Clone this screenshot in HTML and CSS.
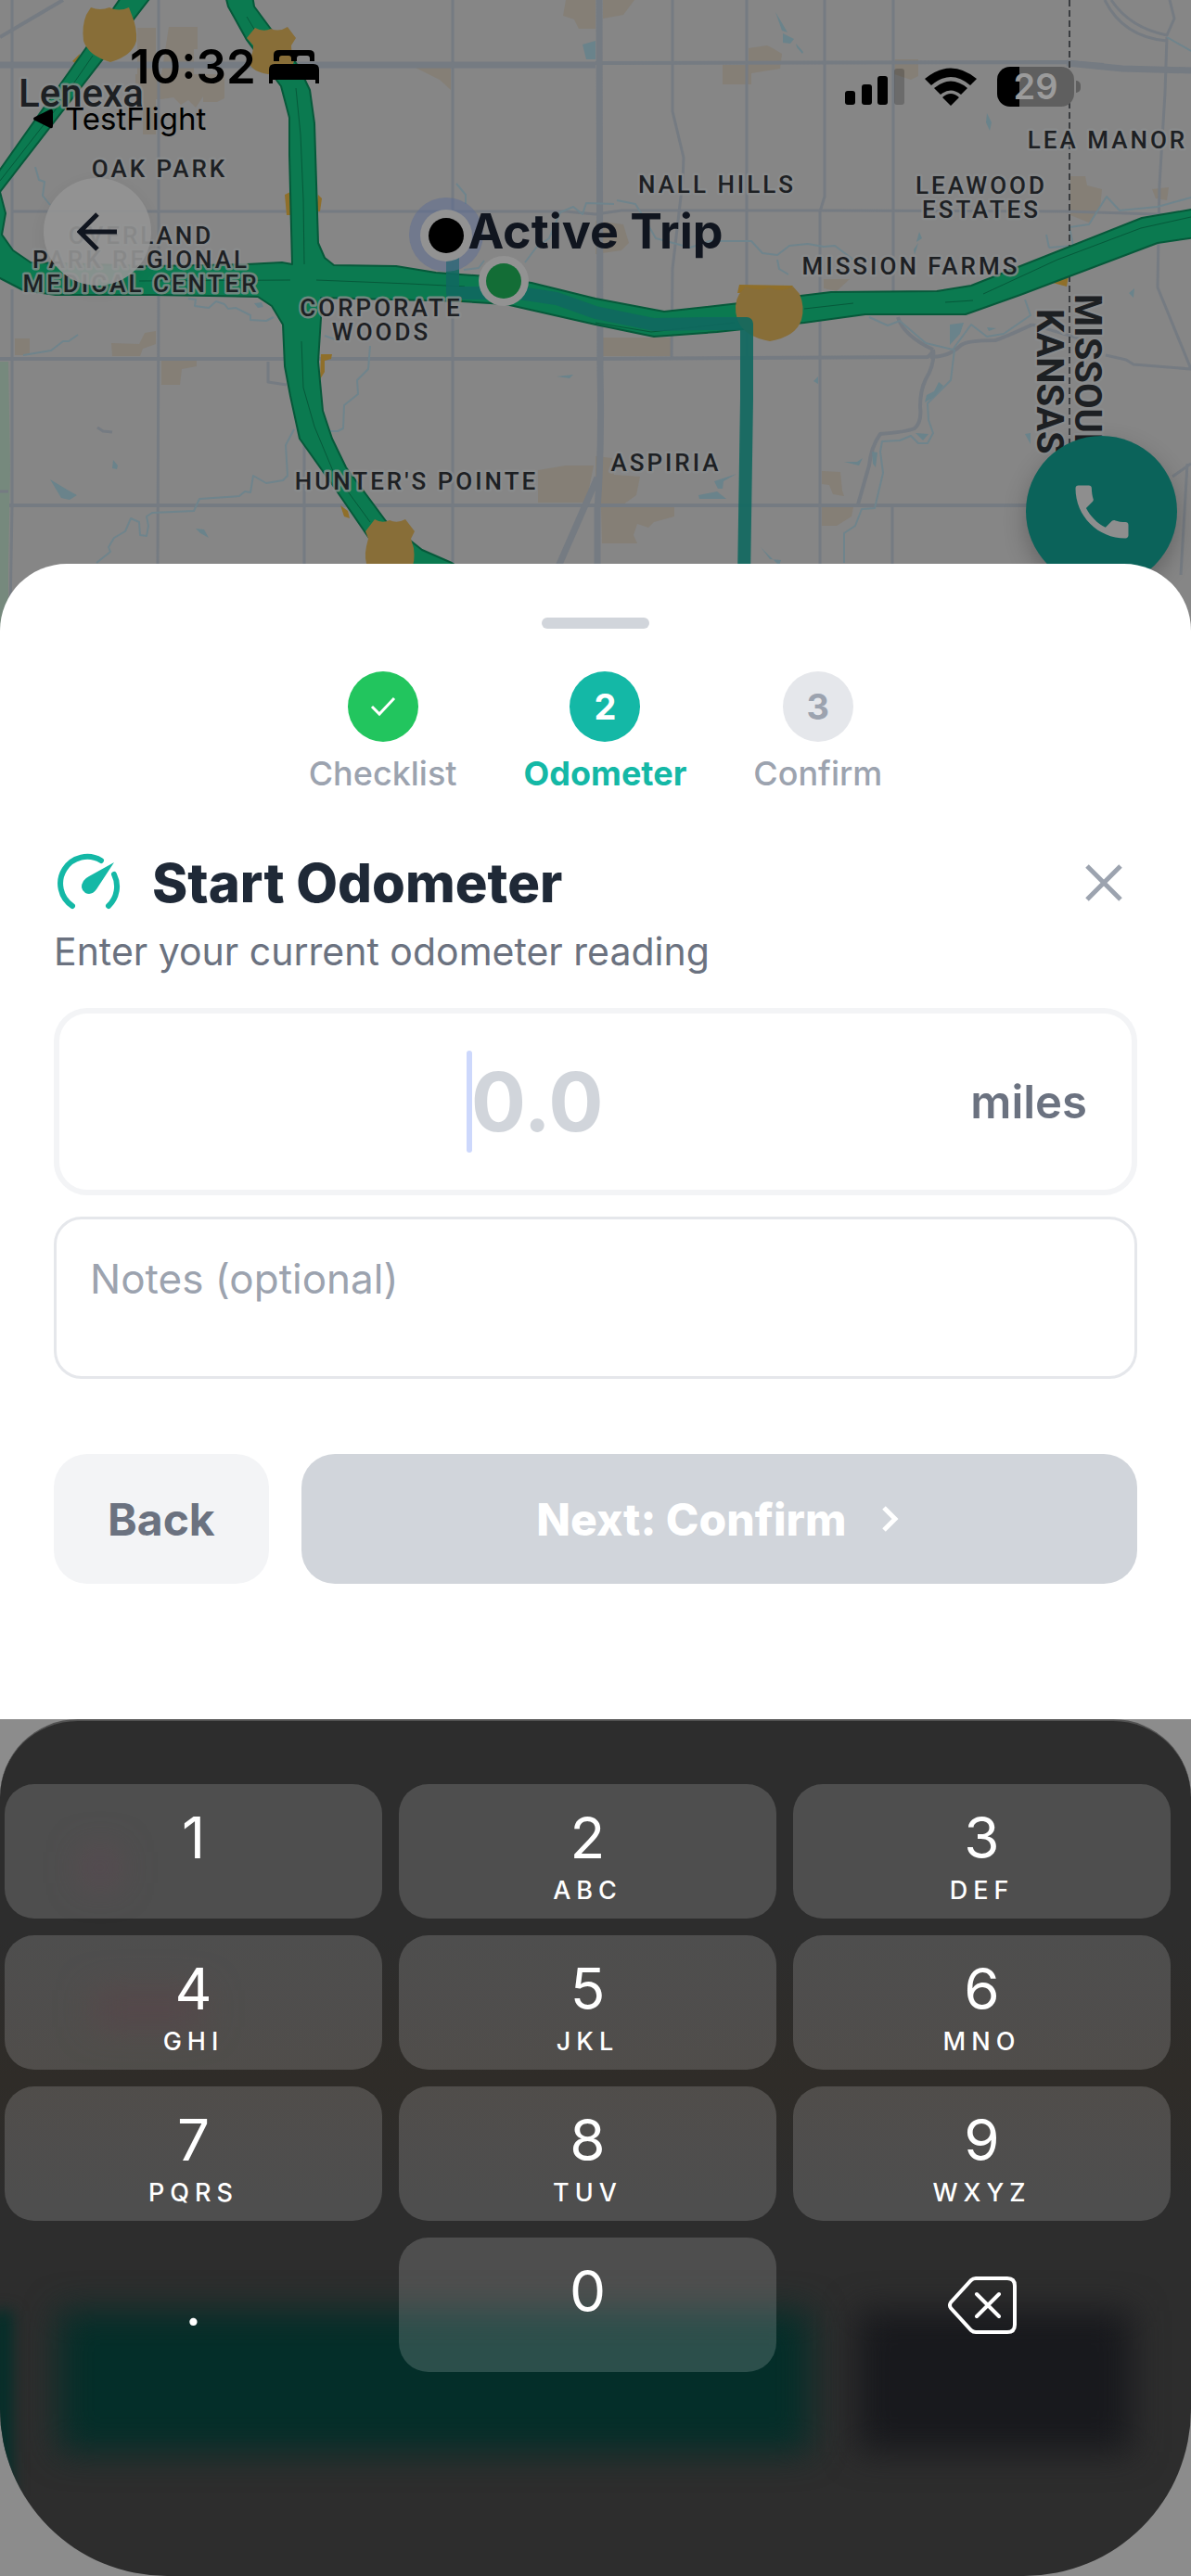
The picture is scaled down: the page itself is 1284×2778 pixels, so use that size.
FILE: index.html
```html
<!DOCTYPE html>
<html lang="en">
<head>
    <meta charset="UTF-8">
    <meta name="viewport" content="width=device-width, initial-scale=1">
    <title>Active Trip</title>
    <link rel="stylesheet" href="styles.css">
</head>
<body>
    <header class="map-view">
        <svg class="map" viewBox="0 0 1284 720" preserveAspectRatio="xMidYMin slice" aria-hidden="true">
            <!-- land patches -->
            <g class="patch">
                <path d="M148 30h20v115h-14v-62h-6zM182 29h31v24h-4v27h33v26l-8 4h-15v-6l-8 12-8-8-8 5-8-8-13 2h-28V80h28z"/>
                <path d="M448 73h38v24l-12-11zM610 0h32v31h-18l-5-10-12-4zM650 0h34l-12 16-22 4z"/>
                <path d="M807 52l20-3 6 3 10 6-2 16-31 5v12h-31V70h28zM965 64h25v18l-8 4-18-6zM1154 190h16l2 10 16 4-2 20-12 16-20-8zM1242 204l18-2-2 14-12-2z"/>
                <path d="M16 365h16v18H16zM120 370l30 1 6-12 12-2v14l-14 5-3 8h-30zM174 389h38v6l-16 3-2 17h-20zM580 507l30-5h30l-8 40h-52z"/>
                <path d="M649 364h76v20h-76zM642 492l18 2 2 18 28 2-4 20-14 10h-30zM648 547h79v10l-22 6-6 6-12-4-4 12 4 9h-38zM886 508l20 1 2 20 2 6-12-2-4-10-8-1zM886 547h34l-2 10-16 10h-16zM888 301h28l-14 13-14-3z"/>
                <path d="M642 238l30 4 6 20-8 8-28 4z"/>
            </g>
            <path class="park" d="M0 390h9l2 115-2 103v112H0z"/>

            <!-- street grid -->
            <g class="street">
                <path d="M13 0V283M13 312V545L10 720M171 0V283M171 318L170 620M488 0V300M488 330V620M328 390V620"/>
                <path d="M725 0V120l12 50-1 25-11 95-1 95M805 0V386M889 0v212l-5 16v400M963 0v340M962 545v75"/>
                <path d="M13 228H610L642 231 670 227H884L1150 228 1284 232"/>
                <path d="M1191 0q20 40 67 44M1198 0q20 30 60 38l8-18-5-20M1258 40l-2 60-6 100-2 110 36 88M1113 350l50 15M1192 383l22 5 8 5 62 5M1150 545h-40M1284 500l-20 14M1280 500l-7 120"/>
                <path d="M289 390v22l20 3M105 461l6 4 10 1M0 530h9"/>
            </g>
            <g class="street wide">
                <path d="M0 387H642L1000 385q4-2 6-8M10 545H1110M642 68L1150 67 1190 70"/>
                <path d="M1006 377q2 16-8 32-6 12-6 30 2 16-6 23-10 4-37 6-10 14-12 34l-12 42M968 342q6 20 38 35M1003 385q20 0 32-12 6-6 38-6 12-4 40-17"/>
                <path d="M0 40L68 0"/>
            </g>
            <g class="street major">
                <path d="M0 70H642M646 0L647 400q2 80-3 150v70M598 620L644 515M1150 68l60 6 74 2"/>
            </g>

            <!-- creeks and ponds -->
            <g class="creek">
                <path d="M104 607l15-12-2-5 6-10 12-7 6-14 9 4 1 14 7 1 2-11-2-10 6-4 45-2 6-13 43-3 6-5 6 1 3-18 14 8 18-3 5-5-2-33 9-17"/>
                <path d="M399 373l-2 25-12 12 1 15-15 12-1 25-6 3h-8M25 383l30-5 13-10h6l10-7"/>
                <path d="M203 322l8 1-1 7 15 2 8-7 9 3 4 5 8-1 16 8v5l17 1 8-4M38 180l4 14 6 2-2 15 8 10"/>
                <path d="M937 342l20 9 13-5 28 24 29 7 20-27 17 13 18-3 29-20-6-17"/>
                <path d="M1029 377l-4 33-25 25 1 18 5 14-6 11h-10l-8-8-12 5-19 1-2 11 3 23-9 38-14 1-7 18-12 8v32"/>
                <path d="M566 283l12-16 14-10 12-28 14-6 10 8 4-12 30 1M665 216l20 4 10 16 12 21 37 10 21-7h45l12 13 16 2 13-10 20-2 17 3 12-1 20 15M492 198l10 12v10M500 291l16-2 6-8M838 280l2 10 10 6"/>
                <path d="M1131 267l-3-14M1131 267l26-2-4-20 21-3 19-30 14 15 41-4 36-10M1258 40l26 15M350 362l14 5"/>
            </g>
            <g class="pond">
                <path d="M836 13l13 22-6-2zM844 36l12 6-4 5-8-1zM858 47l8 9-1 2-6-7zM628 48l14-4v20h-10zM1064 122l5 10-2 9-4-9zM991 250l3 7-6 4zM990 262l-4 13-1-6z"/>
                <path d="M54 517l20 12 9 5-8 5-9-2zM122 496l5 6-1 4-5-1zM211 570l9 1 5 9-9-5zM274 327l8-1 2 5-6 1zM600 406l18-2-4 4z"/>
                <path d="M1024 350l15-2-4 12-11 12zM1012 412l5 4-10 12-10 6 2-8 8-4zM987 467l14 1-6 7zM794 511l-14 8-1 8h-5l-4-8zM753 534l20-4 10 8H754zM820 590l10 13 12 1-2 6zM940 487l6 1-2 16-3-4zM910 498h14l6-4-4 8zM1105 468l6-1v12zM1217 316l6-5-1 10zM1064 353l10 1-8 3zM877 411l5-5v8z"/>
            </g>
            <path class="state-line" d="M1153 0V500"/>

            <!-- highways -->
            <g class="highway-stub">
                <path d="M78 66l8-8-2 12zM307 210l8-4v26h-6zM343 210l4 4-2 14h-4zM346 382h12l-1 5-7 2v12l-5 8zM367 545l8 6 2 8-6-2zM797 307l58 1-4 6-56 2zM1135 305l17-8-2 12z"/>
            </g>
            <path class="highway" d="M164 -5L0 207 6 230 2 253 14 270 33 283 164 287 266 285 304 283 315 285 312 167V127L303 93 266 43 246 7 243 -5H272L274 7 291 30 322 72 334 97 339 133 343 262 350 278 360 286 427 287 470 294 524 298 573 305 642 322 716 336 797 327 896 315 1010 314 1047 308 1100 287 1231 235 1290 225V256L1248 262 1100 318 1041 339H933L867 348 773 358 705 363 642 350 545 328 498 325 346 321V343L343 390 348 443 358 473 373 504 416 562 455 593 487 607 515 625H450L397 579 360 525 323 473 313 427 307 395 305 350 293 330 278 320 164 318H60L25 313 0 300 -20 290V215L0 183 94 50 132 -5z"/>
            <g class="highway-line">
                <path d="M0 195L60 118 100 60M266 18l9 15M319 95l5 50 3 70 1 70M150 303l163-1M341 302l100 4 60 3M325 368l2 50 12 42 20 48 40 55M642 348l60 10 90-10M867 333l53-6M1019 326l30-2M1060 317l80-37 90-34 54-12"/>
            </g>

            <g class="shield">
                <path d="M98 8q10 4 20 0 10 5 21 0l3 8q6 14 5 28-4 16-28 23-24-7-29-23-2-16 3-28z"/>
                <path d="M275 30q9 5 17 1 9 4 18-2l9 12-5 8q0 8 3 14 2 13-28 17-22-4-20-16 4-6 4-15l-7-8z"/>
                <path d="M804 309q13 6 25 1 12 6 26-1l7 8q6 14 2 28-6 18-34 23-28-5-35-23-5-16 2-28z"/>
                <path d="M404 560q8 5 16 1 8 4 17-1l10 13-4 8 3 10q2 16-3 22H397q-5-10-2-24l2-8-3-8z"/>
            </g>

            <!-- trip route -->
            <path class="route" d="M488 270V316H560L600 322 642 337 705 350 760 349H805V430L802 625"/>
            <circle class="halo" cx="481" cy="253" r="40"/>
            <circle class="ring" cx="481" cy="254" r="28"/>
            <circle class="dot" cx="481" cy="254" r="19"/>
            <circle class="ring" cx="543" cy="303" r="27"/>
            <circle class="dot-start" cx="543" cy="303" r="19"/>

            <g class="place">
                <text x="172" y="191">OAK PARK</text>
                <text x="152" y="263">OVERLAND</text>
                <text x="152" y="289">PARK REGIONAL</text>
                <text x="152" y="315">MEDICAL CENTER</text>
                <text x="411" y="341">CORPORATE</text>
                <text x="411" y="367">WOODS</text>
                <text x="449" y="528">HUNTER'S POINTE</text>
                <text x="718" y="508">ASPIRIA</text>
                <text x="773" y="208">NALL HILLS</text>
                <text x="1058" y="209">LEAWOOD</text>
                <text x="1058" y="235">ESTATES</text>
                <text x="1194" y="160">LEA MANOR</text>
                <text x="982" y="296">MISSION FARMS</text>
            </g>
            <text class="city" x="20" y="115">Lenexa</text>
            <text class="state" transform="translate(1118 333) rotate(90)">KANSAS</text>
            <text class="state" transform="translate(1159 317) rotate(90)">MISSOURI</text>
        </svg>

        <div class="status-bar">
            <div class="status-left">
                <div class="clock">
                    <span>10:32</span>
                    <svg width="54" height="38" viewBox="0 0 54 38" aria-hidden="true">
                        <path d="M5 13V6q0-5 6-5h32q6 0 6 5v7h-5V10q0-3-3-3H33q-3 0-3 3v3h-6v-3q0-3-3-3H14q-3 0-3 3v3zM0 37V22q0-6 6-6h42q6 0 6 6v15h-4v-4H4v4z"/>
                    </svg>
                </div>
                <a class="back-app" href="#">
                    <svg width="22" height="22" viewBox="0 0 22 22" aria-hidden="true"><path d="M1 9.500Q-1 11 1 12.500L18 21q3 1 3-2V3q0-3-3-2z"/></svg>
                    TestFlight
                </a>
            </div>
            <div class="status-right">
                <svg width="64" height="42" viewBox="0 0 64 42" aria-hidden="true">
                    <rect x="0" y="25" width="11" height="15" rx="3"/>
                    <rect x="18" y="18" width="11" height="22" rx="3"/>
                    <rect x="35" y="9" width="11" height="31" rx="3"/>
                    <rect x="53" y="1" width="11" height="39" rx="3" opacity=".2"/>
                </svg>
                <svg width="56" height="42" viewBox="0 0 56 42" aria-hidden="true">
                    <path d="M0 12Q28-11 56 12L49 19Q28 1 7 19zM10 22q18-15 36 0l-7 7q-11-9-22 0zM19 32q9-8 18 0l-9 9z"/>
                </svg>
                <div class="battery"><span>29</span></div>
            </div>
        </div>

        <div class="nav-bar">
            <button class="nav-back" type="button" aria-label="Go back">
                <svg width="44" height="44" viewBox="0 0 44 44" aria-hidden="true"><path d="M43 22H4M22 3L3 22l19 19"/></svg>
            </button>
            <h1>Active Trip</h1>
        </div>

        <button class="call" type="button" aria-label="Call">
            <svg width="76" height="76" viewBox="0 0 24 24" aria-hidden="true">
                <path d="M20 15.500c-1.200 0-2.500-.2-3.600-.6-.3-.1-.7 0-1 .2l-2.200 2.200c-2.800-1.400-5.100-3.800-6.600-6.600l2.200-2.200c.3-.3.4-.7.200-1-.3-1.100-.5-2.300-.5-3.500 0-.6-.4-1-1-1H4c-.6 0-1 .4-1 1 0 9.400 7.600 17 17 17 .6 0 1-.4 1-1v-3.500c0-.6-.4-1-1-1z"/>
            </svg>
        </button>
    </header>

    <main class="sheet">
        <div class="handle"></div>

        <ol class="steps">
            <li class="step done">
                <span class="badge">
                    <svg width="30" height="22" viewBox="0 0 30 22" aria-hidden="true"><path d="M3 11l8 8L27 2"/></svg>
                </span>
                Checklist
            </li>
            <li class="step active"><span class="badge">2</span>Odometer</li>
            <li class="step"><span class="badge">3</span>Confirm</li>
        </ol>

        <form>
            <div class="title-row">
                <svg class="gauge" width="72" height="72" viewBox="-3 0 72 72" aria-hidden="true">
                    <path class="arc" d="M17 61A29 29 0 0 1 48 12M62 27A29 29 0 0 1 56 61"/>
                    <path d="M62 14L43 43Q38 50 31 47 24 42 29 34q2-3 6-5z"/>
                </svg>
                <h2>Start Odometer</h2>
                <button class="close" type="button" aria-label="Close">
                    <svg width="42" height="42" viewBox="0 0 42 42" aria-hidden="true"><path d="M3 3l36 36M39 3L3 39"/></svg>
                </button>
            </div>
            <p class="hint"><label for="odometer">Enter your current odometer reading</label></p>

            <div class="reading">
                <div class="reading-field">
                    <input type="text" id="odometer" inputmode="decimal" placeholder="0.0">
                    <span class="caret"></span>
                </div>
                <span class="unit">miles</span>
            </div>

            <textarea class="notes" id="notes" placeholder="Notes (optional)" aria-label="Notes (optional)"></textarea>

            <div class="actions">
                <button class="back" type="button">Back</button>
                <button class="next" type="button" disabled>
                    Next: Confirm
                    <svg width="24" height="32" viewBox="0 0 24 32" aria-hidden="true"><path d="M5 4l12 12L5 28"/></svg>
                </button>
            </div>
        </form>
    </main>

    <section class="keyboard" aria-label="Number pad">
        <div class="pad">
            <div class="glow glow-teal"></div>
            <div class="glow glow-edge"></div>
            <div class="glow glow-dark"></div>
            <div class="glow glow-pink"></div>
            <div class="glow glow-red"></div>
            <div class="keys">
                <button type="button" class="key">1</button>
                <button type="button" class="key">2<small>ABC</small></button>
                <button type="button" class="key">3<small>DEF</small></button>
                <button type="button" class="key">4<small>GHI</small></button>
                <button type="button" class="key">5<small>JKL</small></button>
                <button type="button" class="key">6<small>MNO</small></button>
                <button type="button" class="key">7<small>PQRS</small></button>
                <button type="button" class="key">8<small>TUV</small></button>
                <button type="button" class="key">9<small>WXYZ</small></button>
                <button type="button" class="key plain">.</button>
                <button type="button" class="key">0</button>
                <button type="button" class="key plain" aria-label="Delete">
                    <svg width="74" height="62" viewBox="0 0 74 62" aria-hidden="true">
                        <path d="M30 2H64q8 0 8 8V52q0 8-8 8H30q-3 0-5-2L3 34q-2-3 0-6L25 4q2-2 5-2zM31 19L55 43M55 19L31 43"/>
                    </svg>
                </button>
            </div>
        </div>
    </section>
</body>
</html>
```

FILE: styles.css
```css
* {
    box-sizing: border-box;
}

body {
    margin: 0;
    min-height: 100vh;
    display: flex;
    flex-direction: column;
    background-color: #8c8c8c;
    font-family: Inter, "Liberation Sans", sans-serif;
}

button,
input,
textarea {
    font-family: inherit;
    border: none;
    margin: 0;
    padding: 0;
}

svg {
    display: block;
    flex: none;
}

/* Map */
.map-view {
    position: relative;
    height: 720px;
    overflow: hidden;
    background-color: #868686;
}

.map {
    position: absolute;
    top: 0;
    left: 0;
    width: 100%;
    height: 100%;
    font-family: Roboto, sans-serif;
    font-weight: 500;
}

.patch { fill: #857f76; }
.park { fill: #76897d; }
.pond { fill: #6a838b; }

.street,
.creek {
    fill: none;
    stroke: #757b82;
    stroke-width: 3px;
    stroke-linejoin: round;
}

.creek {
    stroke: #6f848c;
    stroke-width: 2px;
}

.wide { stroke-width: 4px; }
.major { stroke-width: 7px; }

.state-line {
    stroke: #3a3d40;
    stroke-width: 2px;
    stroke-dasharray: 7 4;
}

.highway {
    fill: #0b7a50;
    stroke: #06593a;
    stroke-width: 2px;
    stroke-linejoin: round;
}

.highway-line {
    fill: none;
    stroke: #06593a;
    stroke-width: 1px;
}

.highway-stub { fill: #8f6f2a; }
.shield { fill: #886e38; }

.route {
    fill: none;
    stroke: #0f685f;
    stroke-width: 14px;
    stroke-linejoin: round;
    opacity: .9;
}

.halo {
    fill: #5c6b94;
    opacity: .5;
}

.ring { fill: #929292; }
.dot { fill: #000; }
.dot-start { fill: #136d36; }

.place text,
.city,
.state {
    fill: #1d2023;
    stroke: #8b8d8e;
    stroke-width: 5px;
    stroke-linejoin: round;
    stroke-opacity: .8;
    paint-order: stroke;
}

.place {
    font-size: 26px;
    letter-spacing: 3px;
    text-anchor: middle;
}

.city { font-size: 42px; }

.state {
    font-size: 40px;
    font-weight: 700;
}

/* Status bar and navigation */
.status-bar {
    position: relative;
    display: flex;
    justify-content: space-between;
    padding: 42px 126px 0 36px;
}

.clock {
    display: flex;
    align-items: center;
    gap: 14px;
    padding-left: 104px;
    font-size: 51px;
    font-weight: 600;
    line-height: 60px;
}

.back-app {
    display: flex;
    align-items: center;
    gap: 12px;
    margin-top: 6px;
    color: #000;
    font-size: 33px;
    line-height: 40px;
    text-decoration: none;
}

.status-right {
    display: flex;
    align-items: center;
    align-self: flex-start;
    gap: 22px;
    padding-top: 30px;
}

.battery {
    position: relative;
    width: 83px;
    height: 43px;
    border-radius: 14px;
    background: linear-gradient(to right, #000 24px, #5f5f5f 24px);
    color: #9b9b9b;
    font-size: 38px;
    font-weight: 600;
    line-height: 43px;
    text-align: center;
}

.battery::after {
    content: "";
    position: absolute;
    right: -7px;
    top: 15px;
    width: 5px;
    height: 13px;
    border-radius: 0 5px 5px 0;
    background-color: #5f5f5f;
}

.nav-bar {
    position: relative;
    display: grid;
    grid-template-columns: 116px 1fr 116px;
    align-items: center;
    margin-top: 44px;
    padding: 0 47px;
}

.nav-back {
    display: flex;
    align-items: center;
    justify-content: center;
    width: 116px;
    height: 116px;
    border-radius: 50%;
    background-color: rgba(148, 148, 148, .9);
    box-shadow: 0 6px 18px rgba(0, 0, 0, .06);
}

.nav-back svg {
    fill: none;
    stroke: #10151f;
    stroke-width: 5px;
}

.nav-bar h1 {
    margin: 0;
    color: #10151f;
    font-size: 52px;
    font-weight: 700;
    line-height: 60px;
    text-align: center;
}

.call {
    position: absolute;
    right: 15px;
    top: 470px;
    display: flex;
    align-items: center;
    justify-content: center;
    width: 163px;
    height: 163px;
    border-radius: 50%;
    background-color: #0b635a;
    box-shadow: 0 10px 24px rgba(0, 0, 0, .25);
}

.call svg { fill: #8e8e8e; }

/* Bottom sheet */
.sheet {
    position: relative;
    margin-top: -112px;
    padding: 58px 58px 146px;
    border-radius: 72px 72px 0 0;
    background-color: #fff;
}

.handle {
    width: 116px;
    height: 12px;
    margin: 0 auto;
    border-radius: 6px;
    background-color: #d1d5db;
}

.steps {
    display: flex;
    justify-content: center;
    gap: 72px;
    margin: 46px 0 0;
    padding: 0;
    list-style: none;
}

.step {
    display: flex;
    flex-direction: column;
    align-items: center;
    gap: 12px;
    color: #9ca3af;
    font-size: 36px;
    font-weight: 500;
    line-height: 44px;
}

.badge {
    display: flex;
    align-items: center;
    justify-content: center;
    width: 76px;
    height: 76px;
    border-radius: 50%;
    background-color: #e5e7eb;
    font-size: 38px;
    font-weight: 700;
}

.done .badge { background-color: #22c55e; }

.done svg {
    fill: none;
    stroke: #fff;
    stroke-width: 3px;
}

.active {
    color: #14b8a6;
    font-weight: 700;
}

.active .badge {
    background-color: #14b8a6;
    color: #fff;
}

.title-row {
    display: flex;
    align-items: center;
    margin-top: 60px;
}

.gauge {
    fill: #14b8a6;
}

.gauge .arc {
    fill: none;
    stroke: #14b8a6;
    stroke-width: 6px;
    stroke-linecap: round;
}

.title-row h2 {
    flex: 1;
    margin: 0 0 0 34px;
    color: #1f2937;
    font-size: 58px;
    font-weight: 800;
    line-height: 72px;
}

.close {
    padding: 15px;
    background: none;
}

.close svg {
    fill: none;
    stroke: #9ca3af;
    stroke-width: 5px;
}

.hint {
    margin: 12px 0 0;
    color: #6b7280;
    font-size: 41px;
    line-height: 52px;
}

.reading {
    display: flex;
    align-items: center;
    height: 202px;
    margin-top: 35px;
    padding: 0 48px;
    border: 6px solid #f3f4f6;
    border-radius: 36px;
}

.reading-field {
    position: relative;
    flex: 1;
}

.reading input {
    width: 100%;
    background: none;
    color: #1f2937;
    font-size: 88px;
    font-weight: 700;
    line-height: 110px;
    text-align: center;
}

.reading input::placeholder {
    color: #d1d5db;
    opacity: 1;
}

.caret {
    position: absolute;
    left: calc(50% - 76px);
    top: 0;
    width: 6px;
    height: 110px;
    border-radius: 3px;
    background-color: #cdd8fc;
}

.unit {
    color: #6b7280;
    font-size: 49px;
    font-weight: 600;
}

.notes {
    display: block;
    width: 100%;
    height: 175px;
    margin-top: 23px;
    padding: 36px;
    border: 3px solid #e5e7eb;
    border-radius: 30px;
    background-color: #fff;
    font-size: 44px;
    line-height: 56px;
    resize: none;
}

.notes::placeholder {
    color: #9ca3af;
    opacity: 1;
}

.actions {
    display: flex;
    gap: 35px;
    margin-top: 81px;
}

.actions button {
    height: 140px;
    border-radius: 36px;
    font-size: 48px;
}

.back {
    padding: 0 58px;
    background-color: #f3f4f6;
    color: #6b7280;
    font-weight: 700;
}

.next {
    display: flex;
    flex: 1;
    align-items: center;
    justify-content: center;
    gap: 36px;
    background-color: #d1d5db;
    color: #fff;
    font-weight: 800;
}

.next svg {
    fill: none;
    stroke: #fff;
    stroke-width: 5px;
}

/* Number pad */
.keyboard {
    display: flex;
    flex: 1;
}

.pad {
    position: relative;
    flex: 1;
    overflow: hidden;
    padding: 68px 22px 220px 5px;
    border-top: 2px solid #525252;
    border-radius: 84px 84px 180px 180px;
    background: linear-gradient(#2d2d2d 25%, #2f2c28 42%, #2d2d2d 56%);
}

.glow {
    position: absolute;
    filter: blur(18px);
}

.glow-teal {
    left: 5%;
    right: 32%;
    top: 636px;
    height: 152px;
    background-color: #042e29;
}

.glow-edge {
    left: -10px;
    top: 636px;
    width: 24px;
    height: 200px;
    filter: blur(8px);
    background-color: #042e29;
}

.glow-dark {
    left: 72%;
    right: 5%;
    top: 636px;
    height: 152px;
    background-color: #18191d;
}

.glow-pink {
    left: 90px;
    top: 140px;
    width: 36px;
    height: 36px;
    background-color: #3a2630;
}

.glow-red {
    left: 100px;
    top: 290px;
    width: 120px;
    height: 40px;
    background-color: #362528;
}

.keys {
    position: relative;
    display: grid;
    grid-template-columns: repeat(3, 1fr);
    gap: 18px;
}

.key {
    display: flex;
    flex-direction: column;
    align-items: center;
    height: 145px;
    padding-top: 21px;
    border-radius: 32px;
    background-color: rgba(255, 255, 255, .16);
    color: #fff;
    font-size: 62px;
    font-weight: 400;
    line-height: 74px;
}

.key small {
    font-size: 27px;
    font-weight: 500;
    line-height: 40px;
    letter-spacing: 6px;
}

.plain {
    justify-content: center;
    padding-top: 0;
    background: none;
}

.plain svg {
    fill: none;
    stroke: #fff;
    stroke-width: 4px;
    stroke-linecap: round;
}
```
